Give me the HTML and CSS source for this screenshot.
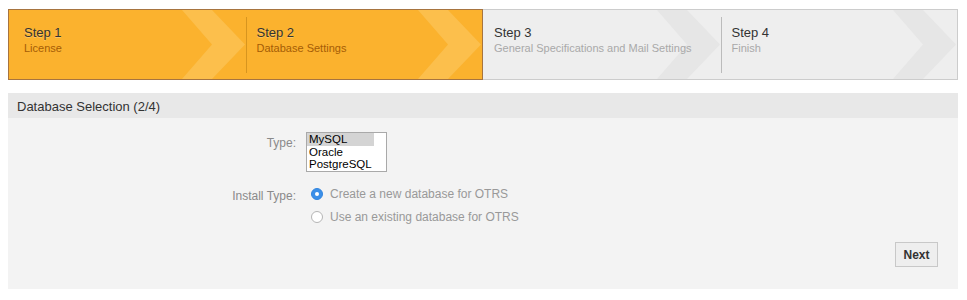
FILE: index.html
```html
<!DOCTYPE html>
<html>
<head>
<meta charset="utf-8">
<title>OTRS Installer</title>
<link rel="stylesheet" href="styles.css">
</head>
<body>
<div class="steps">
  <div class="step done first">
    <svg class="chev" viewBox="0 0 64 69" preserveAspectRatio="none"><polygon points="0,0 30,0 63,34.5 30,69 0,69 30,34.5"/></svg>
    <div class="step-title">Step 1</div>
    <div class="step-sub">License</div>
  </div>
  <div class="step done active">
    <svg class="chev" viewBox="0 0 64 69" preserveAspectRatio="none"><polygon points="0,0 30,0 63,34.5 30,69 0,69 30,34.5"/></svg>
    <div class="step-title">Step 2</div>
    <div class="step-sub">Database Settings</div>
  </div>
  <div class="step todo">
    <svg class="chev" viewBox="0 0 64 69" preserveAspectRatio="none"><polygon points="0,0 30,0 63,34.5 30,69 0,69 30,34.5"/></svg>
    <div class="step-title">Step 3</div>
    <div class="step-sub">General Specifications and Mail Settings</div>
  </div>
  <div class="step todo last">
    <svg class="chev" viewBox="0 0 64 69" preserveAspectRatio="none"><polygon points="0,0 30,0 63,34.5 30,69 0,69 30,34.5"/></svg>
    <div class="step-title">Step 4</div>
    <div class="step-sub">Finish</div>
  </div>
</div>

<div class="panel">
  <div class="panel-head">Database Selection (2/4)</div>
  <div class="panel-body">
    <div class="form">
      <div class="label label-type">Type:</div>
      <div class="field">
        <div class="listbox">
          <div class="opts">
            <div class="opt selected">MySQL</div>
            <div class="opt">Oracle</div>
            <div class="opt">PostgreSQL</div>
          </div>
        </div>
      </div>
      <div class="label label-install">Install Type:</div>
      <div class="field radios">
        <label class="radio"><span class="dot on"></span>Create a new database for OTRS</label>
        <label class="radio"><span class="dot"></span>Use an existing database for OTRS</label>
      </div>
    </div>
    <div class="actions">
      <button class="btn">Next</button>
    </div>
  </div>
</div>
</body>
</html>
```

FILE: styles.css
```css
* { box-sizing: border-box; }
body {
  margin: 9px 8px 8px 8px;
  font-family: "Liberation Sans", Arial, Helvetica, sans-serif;
  background: #fff;
  color: #333;
}
.steps {
  display: grid;
  grid-template-columns: repeat(4, 1fr);
  width: 950px;
  height: 71px;
}
.step {
  position: relative;
  padding: 15px 0 0 11px;
  overflow: hidden;
  min-width: 0;
}
.step.done {
  background: #fbb22e;
  border-top: 1px solid #a7743f;
  border-bottom: 1px solid #a7743f;
}
.step.todo {
  background: #eeeeee;
  border-top: 1px solid #cccccc;
  border-bottom: 1px solid #cccccc;
}
.step.first {
  border-left: 1px solid #a7743f;
  padding-left: 15px;
}
.step.active {
  border-right: 1px solid #a7743f;
}
.step.last {
  border-right: 1px solid #cccccc;
}
.step.active::before,
.step.last::before {
  content: "";
  position: absolute;
  left: 0;
  top: 7px;
  bottom: 6px;
  width: 1px;
}
.step.active::before { background: #d7951f; }
.step.last::before { background: #bbbbbb; }
.chev {
  position: absolute;
  top: 0;
  right: 0;
  width: 64px;
  height: 100%;
}
.step.first .chev { right: 0; }
.step.done .chev polygon { fill: #fcbf4c; }
.step.todo .chev polygon { fill: #e6e6e6; }
.step.last .chev { right: 0; }
.step-title {
  position: relative;
  font-size: 13px;
  line-height: 16px;
  color: #333;
}
.step.done .step-title { text-shadow: 0 1px 0 rgba(255,255,255,0.25); }
.step-sub {
  position: relative;
  font-size: 11px;
  line-height: 14px;
  white-space: nowrap;
}
.step.done .step-sub { color: #a55d06; }
.step.todo .step-sub { color: #a9a9a9; }

.panel {
  margin-top: 13px;
  width: 950px;
}
.panel-head {
  background: #e8e8e8;
  height: 25px;
  padding: 6px 9px 0;
  font-size: 13px;
  line-height: 15px;
  color: #333;
}
.panel-body {
  background: #f3f3f3;
  padding: 14px 20px 22px 0;
}
.form {
  display: grid;
  grid-template-columns: 288px 1fr;
  column-gap: 10px;
  row-gap: 15px;
  align-items: start;
}
.label {
  text-align: right;
  font-size: 12px;
  line-height: 14px;
  color: #8a8a8a;
}
.label-type { padding-top: 4px; }
.label-install { padding-top: 2px; }
.listbox {
  width: 81px;
  height: 40px;
  border: 1px solid #a9a9a9;
  background: #fff;
  padding-right: 12px;
  overflow: hidden;
}
.opts { width: 100%; }
.opt {
  font-size: 11.5px;
  line-height: 12.6px;
  height: 12.6px;
  color: #000;
  padding-left: 2px;
  white-space: nowrap;
}
.opt.selected { background: #d4d4d4; }
.radios {
  display: flex;
  flex-direction: column;
  gap: 9px;
  padding-left: 5px;
}
.radio {
  display: flex;
  align-items: center;
  font-size: 12px;
  line-height: 14px;
  color: #999;
}
.dot {
  width: 12px;
  height: 12px;
  border-radius: 50%;
  border: 1px solid #b5b5b5;
  background: #fff;
  margin-right: 7px;
  position: relative;
  flex: none;
}
.dot.on {
  background: #3b8fe8;
  border-color: #3285df;
}
.dot.on::after {
  content: "";
  position: absolute;
  left: 3px;
  top: 3px;
  width: 4px;
  height: 4px;
  border-radius: 50%;
  background: #fff;
}
.actions {
  display: flex;
  justify-content: flex-end;
  margin-top: 18px;
}
.btn {
  font-family: "Liberation Sans", Arial, Helvetica, sans-serif;
  font-weight: bold;
  font-size: 12px;
  color: #333;
  background: #eeeeee;
  border: 1px solid #c8c8c8;
  height: 25px;
  width: 43px;
  padding: 0;
  margin: 0;
}
```
